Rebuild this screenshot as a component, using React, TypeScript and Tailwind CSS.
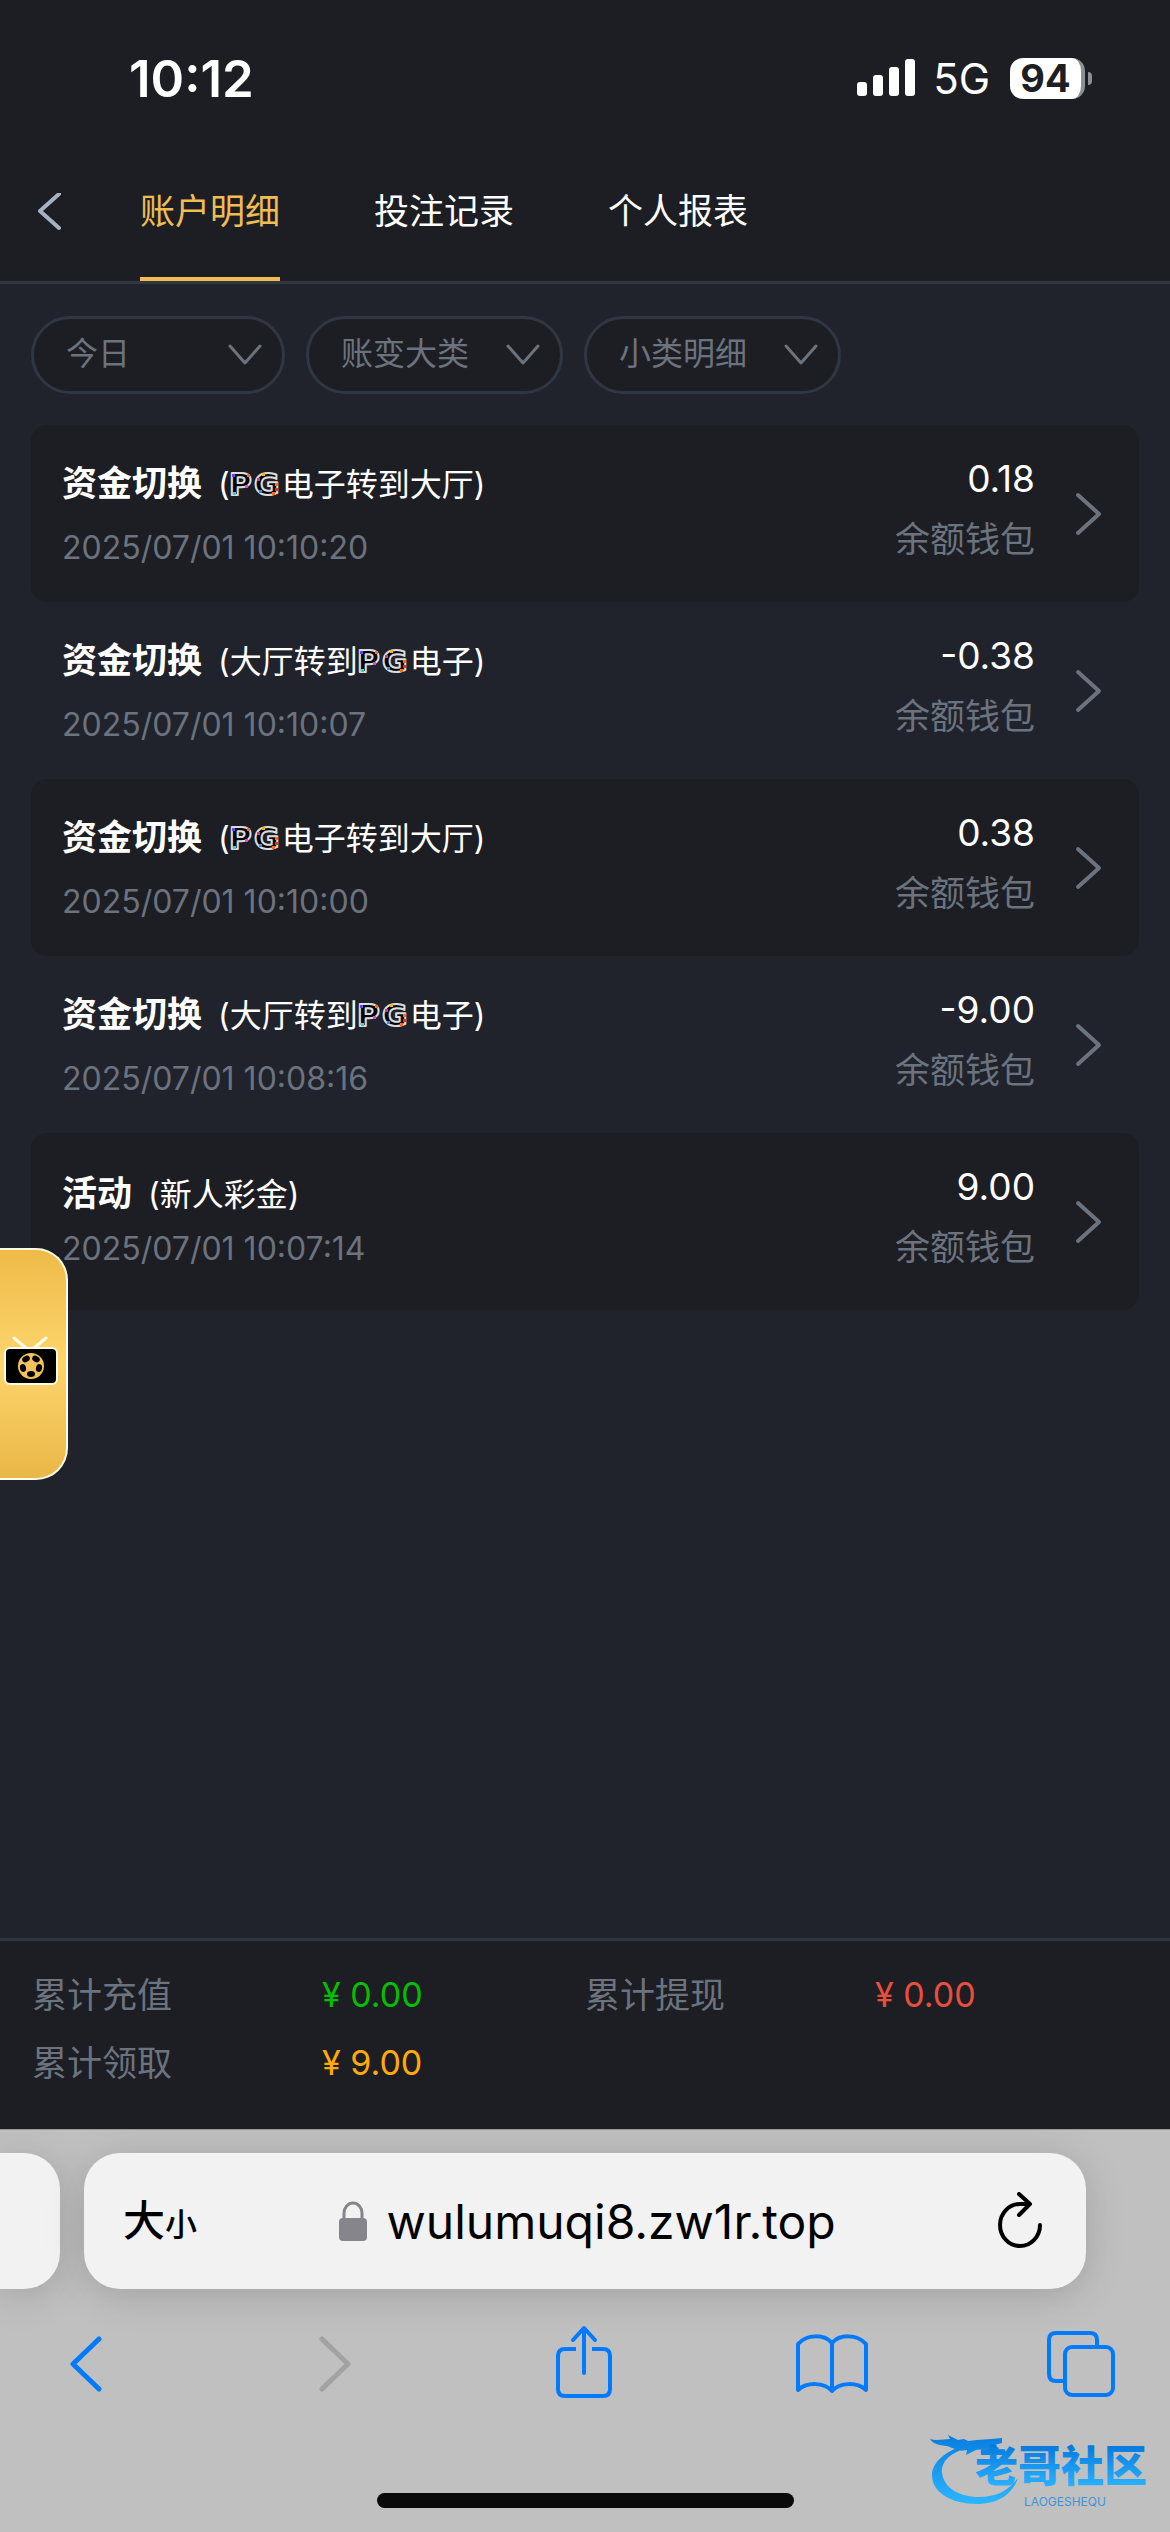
import { useState } from 'react';

const tabs = ['账户明细', '投注记录', '个人报表'];

const filters = [
  { label: '日期', options: ['今日', '昨日'] },
  { label: '大类', options: ['账变大类'] },
  { label: '小类', options: ['小类明细'] },
];

const records = [
  { title: '资金切换', before: '', logo: true, after: '电子转到大厅', time: '2025/07/01 10:10:20', amount: '0.18' },
  { title: '资金切换', before: '大厅转到', logo: true, after: '电子', time: '2025/07/01 10:10:07', amount: '-0.38' },
  { title: '资金切换', before: '', logo: true, after: '电子转到大厅', time: '2025/07/01 10:10:00', amount: '0.38' },
  { title: '资金切换', before: '大厅转到', logo: true, after: '电子', time: '2025/07/01 10:08:16', amount: '-9.00' },
  { title: '活动', before: '新人彩金', logo: false, after: '', time: '2025/07/01 10:07:14', amount: '9.00' },
];

const totals = [
  { label: '累计充值', value: '0.00', color: 'text-[#04be02]' },
  { label: '累计提现', value: '0.00', color: 'text-[#ea4e3d]' },
  { label: '累计领取', value: '9.00', color: 'text-[#ffaa09]' },
];

function StatusBar() {
  return (
    <div className="flex h-[142px] items-center justify-between pt-[14px] pr-[78px] pl-[129px] text-white">
      <span className="text-[51px] leading-none font-semibold">10:12</span>
      <div className="flex items-center">
        <svg width="60" height="38" viewBox="0 0 60 38" fill="currentColor">
          <rect x="0" y="23" width="10" height="14" rx="3" />
          <rect x="16" y="16" width="10" height="21" rx="3" />
          <rect x="32" y="8" width="10" height="29" rx="3" />
          <rect x="48" y="0" width="10" height="37" rx="3" />
        </svg>
        <span className="ml-4 pt-[2px] text-[42px] leading-none">5G</span>
        <div className="ml-5 flex items-center">
          <div className="flex h-[41px] w-[75px] items-center justify-center rounded-[13px] border-r-4 border-[#8e8f91] bg-white text-[38px] leading-none font-bold text-[#1e1f24]">
            94
          </div>
          <div className="ml-[3px] h-[13px] w-[4px] rounded-r-full bg-[#8e8f91]" />
        </div>
      </div>
    </div>
  );
}

function PgLogo() {
  return (
    <svg className="inline-block overflow-visible align-baseline" width="52" height="26" viewBox="0 0 52 26" role="img" aria-label="PG">
      <g fontFamily="'DejaVu Sans', sans-serif" fontSize="31" fontWeight="700" fill="#000" stroke="#dcdcdc" strokeWidth="2" strokeLinejoin="round">
        <text x="-1" y="25">P</text>
        <text x="24" y="25">G</text>
      </g>
      <path d="M2 4h3v3H2z" fill="#7a3cf0" />
      <path d="M17 4h3v3h-3zM45 13h3v3h-3zM42 22h3v3h-3z" fill="#ff6a1c" />
      <path d="M15 15h3v3h-3z" fill="#f03cf0" />
      <path d="M3 22h3v3H3z" fill="#2cd0e8" />
      <path d="M32 3h3v3h-3z" fill="#ffb800" />
      <path d="M27 8h3v3h-3z" fill="#f0288c" />
      <path d="M29 20h3v3h-3z" fill="#2c8cf0" />
      <path d="M45 18h3v3h-3z" fill="#f02828" />
    </svg>
  );
}

function Filter({ label, options }: { label: string; options: string[] }) {
  return (
    <div className="relative w-[257px] first:w-[254px]">
      <select
        aria-label={label}
        className="h-[78px] w-full appearance-none rounded-full border-3 border-[#303743] bg-[#1d1e23] pr-14 pb-[2px] pl-8 text-[32px] text-[#6b737f]"
      >
        {options.map((option) => (
          <option key={option}>{option}</option>
        ))}
      </select>
      <svg className="pointer-events-none absolute top-[28px] right-[23px]" width="34" height="22" viewBox="0 0 34 22" fill="none" stroke="#6b737f" strokeWidth="3" strokeLinecap="round" strokeLinejoin="round">
        <path d="M2 2l15 17L32 2" />
      </svg>
    </div>
  );
}

function Records() {
  return (
    <ul className="mt-[31px] px-[31px]">
      {records.map((r) => (
        <li key={r.time} className="rounded-2xl odd:bg-[#1d1e23]">
          <button type="button" className="flex h-[177px] w-full items-start pt-[34px] pr-9 pl-[31px] text-left">
            <div className="flex-1">
              <div className={r.logo ? 'h-[66px] leading-[48px]' : 'mt-[2px] h-[57px] leading-[48px]'}>
                <span className="text-[35px] font-bold text-white">{r.title}</span>
                <span className="ml-4 text-[32px] text-white">
                  ({r.before}
                  {r.logo && <PgLogo />}
                  {r.after})
                </span>
              </div>
              <div className="text-[32px] leading-[46px] text-[#6b737f]">{r.time}</div>
            </div>
            <div className="text-right">
              <div className="text-[37px] leading-[40px] text-white">{r.amount}</div>
              <div className="mt-4 text-[35px] leading-[48px] text-[#6b737f]">余额钱包</div>
            </div>
            <svg className="mt-[33px] ml-10" width="28" height="44" viewBox="0 0 28 44" fill="none" stroke="#6b737f" strokeWidth="4" strokeLinecap="round" strokeLinejoin="round">
              <path d="M3 3l21 19L3 41" />
            </svg>
          </button>
        </li>
      ))}
    </ul>
  );
}

function LiveButton() {
  return (
    <button
      type="button"
      aria-label="直播"
      className="absolute top-[1248px] left-0 flex h-[232px] w-[68px] items-center rounded-r-[32px] border-2 border-l-0 border-[#fffbe6] bg-linear-to-b from-[#eebb48] via-[#fdd56c] to-[#e9b747] pb-[6px]"
    >
      <svg className="ml-[3px]" width="56" height="50" viewBox="0 0 56 50" fill="none">
        <path d="M11 2l12 10M43 2L31 12" stroke="#fffbe6" strokeWidth="3" strokeLinecap="round" />
        <rect x="2" y="12" width="52" height="36" rx="5" fill="#000" stroke="#fffbe6" strokeWidth="2" />
        <circle cx="28" cy="30" r="13" fill="#f2c35a" />
        <g fill="#000">
          <ellipse cx="23" cy="23" rx="4" ry="3" transform="rotate(-30 23 23)" />
          <ellipse cx="33" cy="23" rx="4" ry="3" transform="rotate(30 33 23)" />
          <ellipse cx="20" cy="32" rx="3" ry="4" transform="rotate(-15 20 32)" />
          <ellipse cx="36" cy="32" rx="3" ry="4" transform="rotate(15 36 32)" />
          <ellipse cx="28" cy="38" rx="4" ry="3" />
        </g>
      </svg>
    </button>
  );
}

function Watermark() {
  return (
    <svg className="absolute right-[14px] bottom-[24px]" width="228" height="82" viewBox="0 0 228 82" role="img" aria-label="老哥社区">
      <defs>
        <linearGradient id="dragon" gradientUnits="userSpaceOnUse" x1="0" y1="4" x2="0" y2="76">
          <stop offset="0" stopColor="#0579dc" />
          <stop offset="1" stopColor="#2bb4ff" />
        </linearGradient>
        <linearGradient id="brand" x1="0" y1="0" x2="0" y2="1">
          <stop offset="0.2" stopColor="#0579dc" />
          <stop offset="0.9" stopColor="#2bb4ff" />
        </linearGradient>
      </defs>
      <g fill="url(#dragon)">
        <path d="M35 20C17 25 4 37 4 49c0 18 20 29 45 29 20 0 35-9 41-26-10 13-22 19-39 19-20 0-35-9-37-24-1-12 9-21 26-25z" />
        <path d="M2 13c7 2 14 0 20 0l-2-4 10 5 6-1 4 2 9-1 14-1 11-1v5l-8 2 5 3-2 3-12-2-9 1-10 5 1-5-7 1 3-3-8 1c-4-1-6-3-9-3C11 19 5 18 2 13z" />
      </g>
      <text x="47" y="56" fontFamily="'Noto Sans CJK SC', sans-serif" fontSize="43" fontWeight="900" fill="url(#brand)">老哥社区</text>
      <text x="96" y="80" fontFamily="Inter, sans-serif" fontSize="12" fill="#3f93d8">LAOGESHEQU</text>
    </svg>
  );
}

function Browser() {
  return (
    <div className="relative overflow-hidden border-t border-[#98989a] bg-[#c0c0c0] pt-[23px] text-black">
      <div className="flex gap-6">
        <div className="h-[136px] w-[60px] rounded-r-[36px] bg-[#f2f2f2] shadow-[0_6px_40px_rgba(0,0,0,0.16)]" />
        <div className="mr-[84px] flex h-[136px] flex-1 items-center rounded-[36px] bg-[#f2f2f2] pr-[42px] pl-[39px] shadow-[0_6px_40px_rgba(0,0,0,0.16)]">
          <button type="button" aria-label="页面设置" className="flex items-baseline pt-1 font-medium">
            <span className="text-[42px] leading-[60px]">大</span>
            <span className="text-[32px] leading-[60px]">小</span>
          </button>
          <div className="flex flex-1 items-center justify-center gap-5 pr-2">
            <svg width="28" height="40" viewBox="0 0 28 40" fill="none">
              <path d="M5 19v-7a9 10 0 0 1 18 0v7" stroke="#86858b" strokeWidth="3" />
              <rect x="0" y="17" width="28" height="23" rx="4" fill="#86858b" />
            </svg>
            <input
              type="text"
              aria-label="网址"
              defaultValue="wulumuqi8.zw1r.top"
              className="w-[460px] bg-transparent pt-[2px] text-[48px] leading-[60px] outline-none"
            />
          </div>
          <button type="button" aria-label="重新载入">
            <svg width="48" height="58" viewBox="0 0 48 58" fill="none" stroke="#000" strokeWidth="4" strokeLinecap="round" strokeLinejoin="round">
              <path d="M44 33a20 21 0 1 1-20-21h9" />
              <path d="M23 2l11 10-11 11" />
            </svg>
          </button>
        </div>
      </div>
      <div className="mt-[33px] flex h-[84px] items-center justify-between pr-[52px] pl-[49px] text-[#007aff]">
        <button type="button" aria-label="后退" className="flex w-[74px] justify-center">
          <svg width="34" height="56" viewBox="0 0 34 56" fill="none" stroke="currentColor" strokeWidth="5" strokeLinecap="round" strokeLinejoin="round">
            <path d="M30 3L4 28l26 25" />
          </svg>
        </button>
        <button type="button" aria-label="前进" disabled className="flex w-[74px] justify-center text-[#a2a2a2]">
          <svg width="34" height="56" viewBox="0 0 34 56" fill="none" stroke="currentColor" strokeWidth="5" strokeLinecap="round" strokeLinejoin="round">
            <path d="M4 3l26 25L4 53" />
          </svg>
        </button>
        <button type="button" aria-label="分享" className="flex w-[74px] justify-center">
          <svg width="58" height="78" viewBox="0 0 58 78" fill="none" stroke="currentColor" strokeWidth="4" strokeLinecap="round" strokeLinejoin="round">
            <path d="M29 48V4M18 15L29 3l11 12" />
            <path d="M21 24H10q-7 0-7 7v33q0 7 7 7h38q7 0 7-7V31q0-7-7-7H37" strokeLinecap="butt" />
          </svg>
        </button>
        <button type="button" aria-label="书签" className="flex w-[74px] justify-center">
          <svg width="74" height="62" viewBox="0 0 74 62" fill="none" stroke="currentColor" strokeWidth="4" strokeLinecap="round" strokeLinejoin="round">
            <path d="M37 10C29 1 12 1 3 11v46c9-8 26-8 34 1 8-9 25-9 34-1V11C62 1 45 1 37 10zM37 10v48" />
          </svg>
        </button>
        <button type="button" aria-label="标签页" className="flex w-[74px] justify-center">
          <svg width="68" height="68" viewBox="0 0 68 68" fill="none" stroke="currentColor" strokeWidth="4" strokeLinejoin="round">
            <rect x="18" y="17" width="48" height="48" rx="7" />
            <path d="M50 16v-6q0-7-7-7H9Q2 3 2 10v34q0 7 7 7h8" />
          </svg>
        </button>
      </div>
      <div className="mx-auto mt-[87px] mb-6 h-[15px] w-[417px] rounded-full bg-[#0a0a0a]" />
      <Watermark />
    </div>
  );
}

export default function App() {
  const [active, setActive] = useState(0);

  return (
    <div className="relative flex min-h-screen flex-col bg-[#20232b] font-[Inter,'Noto_Sans_CJK_SC',sans-serif]">
      <header className="border-b-3 border-[#303743] bg-[#1d1e23]">
        <StatusBar />
        <nav className="flex h-[139px] items-stretch">
          <button type="button" aria-label="返回" className="pr-[78px] pl-[37px]">
            <svg width="25" height="38" viewBox="0 0 25 38" fill="none" stroke="#a7b1c2" strokeWidth="4" strokeLinecap="round" strokeLinejoin="round">
              <path d="M22 1L3 18l19 17" />
            </svg>
          </button>
          <div className="flex gap-[94px]">
            {tabs.map((tab, i) => (
              <button
                key={tab}
                type="button"
                onClick={() => setActive(i)}
                className={`border-y-4 border-t-transparent text-[35px] ${
                  i === active ? 'border-b-[#f0bd55] text-[#f0bd55]' : 'border-b-transparent text-white'
                }`}
              >
                {tab}
              </button>
            ))}
          </div>
        </nav>
      </header>

      <main className="flex-1">
        <div className="mt-8 flex gap-[21px] px-[31px]">
          {filters.map((f) => (
            <Filter key={f.label} {...f} />
          ))}
        </div>
        <Records />
      </main>

      <footer>
        <dl className="grid grid-cols-2 border-t-3 border-[#303743] bg-[#1d1e23] px-8 pt-5 pb-8">
          {totals.map((t) => (
            <div key={t.label} className="flex h-[68px] items-center leading-[48px]">
              <dt className="w-[290px] text-[35px] text-[#6b737f]">{t.label}</dt>
              <dd className={`text-[34px] ${t.color}`}>¥ {t.value}</dd>
            </div>
          ))}
        </dl>
        <Browser />
      </footer>

      <LiveButton />
    </div>
  );
}
